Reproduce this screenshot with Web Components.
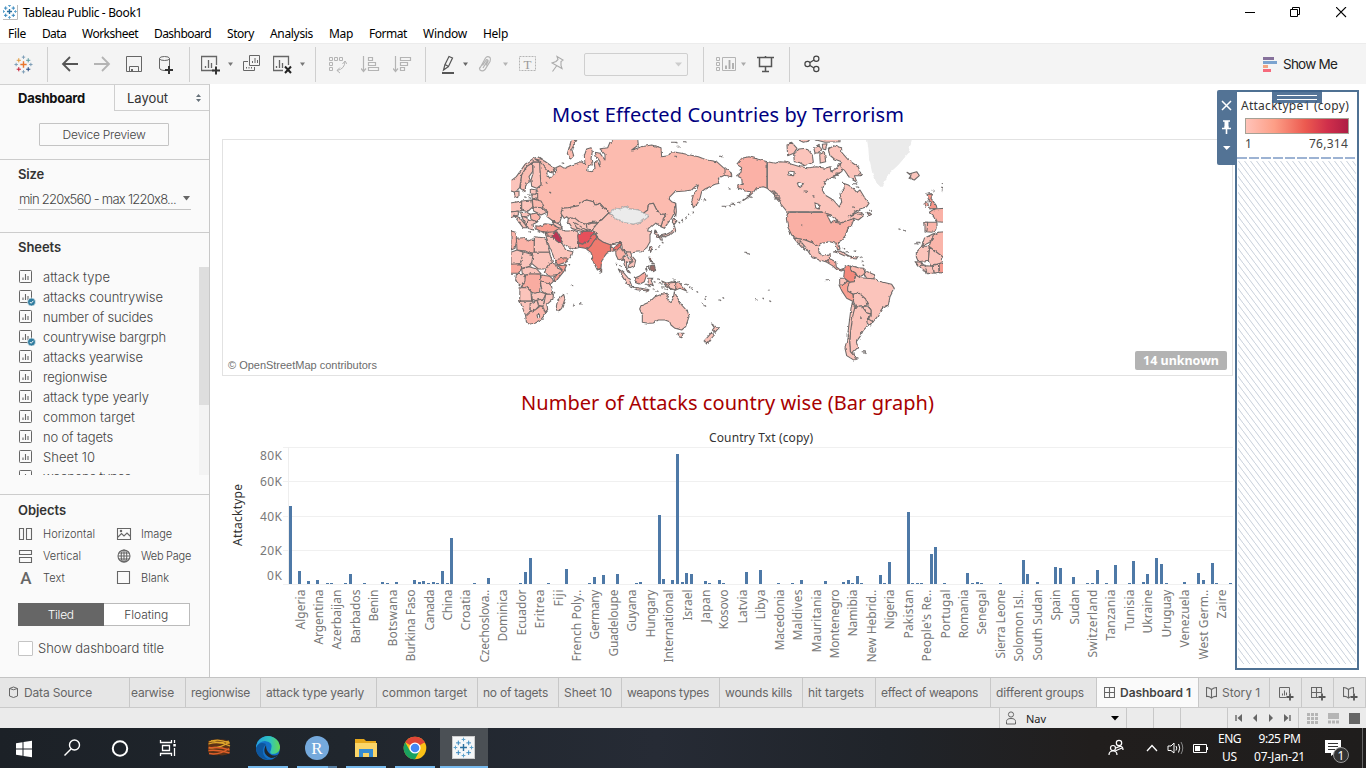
<!DOCTYPE html>
<html lang="en">
<head>
<meta charset="utf-8">
<title>Tableau Public - Book1</title>
<style>
html,body{margin:0;height:100%;overflow:hidden;background:#fff}
body{display:flex;flex-direction:column;width:1366px;height:768px;font-family:"Noto Sans","Open Sans",sans-serif}
main{display:flex;flex:1;min-height:0}
</style>
</head>
<body>
<title-bar></title-bar>
<menu-bar></menu-bar>
<tool-bar></tool-bar>
<main>
<side-panel></side-panel>
<dash-board></dash-board>
<legend-panel></legend-panel>
</main>
<sheet-tabs></sheet-tabs>
<status-bar></status-bar>
<task-bar></task-bar>
<script>
/* Each row item is [start, width, markup]; gaps become margins inside a flex row. */
function row(items, from = 0) {
  let end = from;
  return items.map(([x, w, html]) => {
    const m = x - end; end = x + w;
    return `<span class="i" style="margin-left:${m}px;width:${w}px">${html}</span>`;
  }).join('');
}
const svg = (x, y, w, h, body) => `<svg width="${w}" height="${h}" viewBox="${x} ${y} ${w} ${h}">${body}</svg>`;
const txt = (w, s, cls = '') => `<fit-text w="${w}" class="${cls}">${s}</fit-text>`;
const BASE = `:host,*{box-sizing:border-box}.i{display:inline-flex;align-items:center;flex:none}svg{display:block;flex:none}fit-text{flex:none}`;
function define(name, css, html) {
  customElements.define(name, class extends HTMLElement {
    connectedCallback() {
      if (this.shadowRoot) return;
      this.attachShadow({mode: 'open'}).innerHTML = `<style>${BASE}${css}</style>${html}`;
    }
  });
}
function plus(x, y, c, l = 2, sw = 1) {
  return `<path d="M${x - l} ${y}H${x + l}M${x} ${y - l}V${y + l}" stroke="${c}" stroke-width="${sw}" fill="none"/>`;
}
function logo(cx, cy, c, s = 1) {
  return plus(cx, cy, c[0], 3 * s, 1.4) + plus(cx - 4.5 * s, cy - 4 * s, c[1], 2 * s) + plus(cx + 4.5 * s, cy - 4 * s, c[2], 2 * s)
    + plus(cx - 4.5 * s, cy + 4.5 * s, c[3], 2 * s) + plus(cx + 4.5 * s, cy + 4.5 * s, c[4], 2 * s)
    + plus(cx, cy - 7 * s, c[5], 1.6 * s) + plus(cx, cy + 7 * s, c[5], 1.6 * s) + plus(cx - 7 * s, cy, c[5], 1.6 * s) + plus(cx + 7 * s, cy, c[5], 1.6 * s);
}
const BLUE = ['#2a6f9e', '#3b8abf', '#3b8abf', '#3b8abf', '#3b8abf', '#5fa3cc'];

define('title-bar', `:host{display:flex;height:24px;align-items:center;background:#fff;font-size:12px;color:#000}`,
  row([
    [3, 15, svg(3, 4, 15, 15, '<rect x="3" y="4" width="15" height="15" fill="#fff"/><path d="M17.5 4V18.5H3" stroke="#bbb" fill="none"/>' + logo(9.5, 10.5, BLUE, .85))],
    [23, 120, txt(119, 'Tableau Public - Book1')],
    [1245, 11, svg(1245, 5, 11, 11, '<path d="M1245 10.500H1255" stroke="#000"/>')],
    [1290, 11, svg(1290, 5, 11, 11, '<path d="M1290.500 7.500H1297.500V14.500H1290.500ZM1292.500 7.500V5.500H1299.500V12.500H1297.500" fill="none" stroke="#000"/>')],
    [1336, 11, svg(1336, 5, 11, 11, '<path d="M1336 5L1346 15M1346 5L1336 15" stroke="#000" stroke-width="1.1"/>')]
  ]));

define('menu-bar', `:host{display:flex;height:19px;align-items:center;background:#fff;font-size:12px;color:#000}`,
  row([[8,18,'File'],[42,24,'Data'],[82,56,'Worksheet'],[154,57,'Dashboard'],[227,27,'Story'],[270,43,'Analysis'],[329,24,'Map'],[369,38,'Format'],[423,44,'Window'],[483,25,'Help']]
    .map(([x, w, t]) => [x, w, txt(w, t)])));

const sep = x => [x, 1, '<b class="sep"></b>'];
const arrow = (x, c = '#777') => [x, 5, svg(x, 60, 5, 8, `<path d="M${x} 62.500H${x + 5}L${x + 2.5} 66Z" fill="${c}"/>`)];
const ic = (x, w, body) => [x, w, svg(x, 54, w, 21, body)];
define('tool-bar', `:host{display:flex;height:41px;align-items:center;background:#f4f4f4;border-top:1px solid #ececec;font-family:Inter,sans-serif;font-size:13.500px;color:#222}.sep{width:1px;height:35px;background:#cfcfcf}.combo{width:104px;height:23px;border:1px solid #cfcfcf;border-radius:2px;display:flex;justify-content:flex-end;align-items:center;padding-right:5px}`,
  row([
    ic(14, 20, logo(23.5, 64.5, ['#e8762c', '#e29b3f', '#5b9aa0', '#c72037', '#1f447e', '#7f9fb8'], 1.05)),
    sep(47),
    ic(61, 18, '<path d="M62.500 64H78M70 57L63 64L70 71" fill="none" stroke="#555" stroke-width="1.800"/>'),
    ic(93, 18, '<path d="M94 64H109M102 57L109 64L102 71" fill="none" stroke="#b4b4b4" stroke-width="1.800"/>'),
    ic(126, 17, '<path d="M126.500 56.500H141.500V71.500H126.500ZM129.500 71V66.500H138.500V71" fill="none" stroke="#666"/><rect x="131" y="69" width="2" height="3" fill="#666"/>'),
    ic(158, 16, '<path d="M159.500 58.500V68C159.500 69.500 162 70.500 165 70.500M169.500 58.500V66" fill="none" stroke="#666"/><ellipse cx="164.500" cy="58.500" rx="5" ry="2" fill="none" stroke="#666"/><path d="M165 70H173M169 66V74" stroke="#333" stroke-width="2"/>'),
    sep(189),
    ic(201, 20, '<path d="M214 70.500H201.500V56.500H216.500V65M205.500 68V66M208.500 68V60M211.500 68V63" fill="none" stroke="#666" stroke-width="1.300"/><path d="M212 70.500H220M216 66.500V74.500" stroke="#333" stroke-width="2"/>'),
    arrow(228),
    ic(242, 19, '<path d="M249.500 55.500H259.500V65.500H249.500ZM252.500 63V61M255 63V58M257.500 63V60M248 61.500H243.500V70.500H254.500V67M246.500 68.500V67M249 68.500V67M251.500 68.500V67" fill="none" stroke="#666"/>'),
    ic(273, 20, '<path d="M283 70.500H273.500V56.500H288.500V65M276.500 68V66M279.500 68V60M282.500 68V63" fill="none" stroke="#666" stroke-width="1.300"/><path d="M285 66.500L291 73M291 66.500L285 73" stroke="#222" stroke-width="2"/>'),
    arrow(300), sep(315),
    ic(329, 18, '<path d="M329.500 57.500h3v3h-3zM334.500 57.500h3v3h-3zM339.500 57.500h3v3h-3zM329.500 62.500h3v3h-3zM329.500 67.500h3v3h-3zM345 61Q345 69 337 70.500M342.500 64L345 61L347 64M340 67.500L337 70.500L340 73" fill="none" stroke="#b4b4b4"/>'),
    ic(361, 19, '<path d="M363.500 56V71M361 68.500L363.500 71.500L366 68.500M368.500 57.500h4v3h-4zM368.500 62.500h7v3h-7zM368.500 67.500h10v3h-10z" fill="none" stroke="#b4b4b4" stroke-width="1.200"/>'),
    ic(393, 19, '<path d="M395.500 56V71M393 68.500L395.500 71.500L398 68.500M400.500 57.500h10v3h-10zM400.500 62.500h7v3h-7zM400.500 67.500h4v3h-4z" fill="none" stroke="#b4b4b4" stroke-width="1.200"/>'),
    sep(425),
    ic(441, 14, '<path d="M442 73H454" stroke="#555" stroke-width="2"/><path d="M445 64.500L449 56.500L452.500 58L448.500 66.500ZM445 64.500L443.500 70L448.500 66.500" fill="none" stroke="#555" stroke-width="1.200"/>'),
    arrow(463, '#666'),
    ic(478, 14, '<path d="M480 68L485.500 58Q487.500 55.500 490 57.500Q491 59 490 61.500L485 69.500Q482.500 72 480 70Q479 68.500 480 67M483 68L487.500 60.500M486 65.500L488 61.500Q488.500 59.500 486.500 59.500L482.500 65.500" fill="none" stroke="#b4b4b4" stroke-width="1.200"/>'),
    arrow(503, '#b4b4b4'),
    ic(519, 18, '<rect x="519.500" y="56.500" width="16" height="14" fill="none" stroke="#b4b4b4" stroke-dasharray="2 1"/><text x="527.500" y="68.500" text-anchor="middle" font-family="Liberation Serif" font-size="13" fill="#999">T</text>'),
    ic(551, 13, '<path d="M557 56.500L563 60L561 61.500L561 65.500L562 68.500L552 63L556 61.500L558 59.500ZM556.500 66L552.500 71.500" fill="none" stroke="#aaa" stroke-width="1.100"/>'),
    [584, 104, '<div class="combo">' + svg(0, 0, 8, 5, '<path d="M1 .5H8L4.500 4.500Z" fill="#ccc"/>') + '</div>'],
    sep(703),
    ic(716, 21, '<path d="M716.500 57.500h3v3h-3zM716.500 62.500h3v3h-3zM716.500 67.500h3v3h-3zM722.500 57.500h13v13h-13z" fill="none" stroke="#b4b4b4"/><path d="M726 69V65.500M729.500 69V60M733 69V63" stroke="#aaa" stroke-width="1.800"/>'),
    arrow(741, '#aaa'),
    ic(757, 18, '<path d="M757 57.500H774M765.500 56V57M759.500 58V66.500H771.500V58M765.500 67V71M762 71.500H769" fill="none" stroke="#555" stroke-width="1.500"/>'),
    sep(789),
    ic(804, 16, '<path d="M810 62.500L814 60M810 65.500L814 68" stroke="#444" stroke-width="1.300"/><circle cx="807.500" cy="64" r="2.600" fill="none" stroke="#444" stroke-width="1.200"/><circle cx="816.300" cy="58.700" r="2.600" fill="none" stroke="#444" stroke-width="1.200"/><circle cx="816.300" cy="69" r="2.600" fill="none" stroke="#444" stroke-width="1.200"/>'),
    [1263, 14, svg(1263, 55, 14, 17, '<path d="M1263 56h11v3h-11z" fill="#86719b"/><path d="M1263 60h14v3h-14z" fill="#7ba3cf"/><path d="M1263 64h5v3h-5z" fill="#f4a582"/><path d="M1263 68h8v3h-8z" fill="#f66a7c"/>')],
    [1283, 55, txt(54, 'Show Me')]
  ]));

const sheetIcon = on => svg(0, 0, 18, 18, '<rect x="1.500" y="2.500" width="12" height="12" rx=".8" fill="none" stroke="#666"/><path d="M5 12V9.500M7.500 12V6M10 12V8" stroke="#666" stroke-width="1.100"/>'
  + (on ? '<circle cx="13.500" cy="14" r="4" fill="#2f7c9f" stroke="#fafafa" stroke-width=".6"/><path d="M11.800 14l1.300 1.300 2.300-2.500" fill="none" stroke="#fff"/>' : ''));
const sheets = [['attack type',67],['attacks countrywise',120,1],['number of sucides',110],['countrywise bargrph',123,1],['attacks yearwise',100],['regionwise',64],['attack type yearly',106],['common target',92],['no of tagets',70],['Sheet 10',52],['weapons types',88]];
const obj = {
  h: '<path d="M1.500 2.500h4v11h-4zM8.500 2.500h5v11h-5z"/>', v: '<path d="M1.500 2.500h12v4h-12zM1.500 9.500h12v5h-12z"/>',
  i: '<path d="M1.500 2.500h13v11h-13zM2 11L5.500 7.500L8 10L11 7L14 10"/><circle cx="5" cy="5" r=".7"/>',
  w: '<circle cx="8" cy="8" r="6"/><ellipse cx="8" cy="8" rx="2.800" ry="6"/><path d="M2 8H14M8 2V14M3 5H13M3 11H13"/>', b: '<path d="M1.500 1.500h12v12h-12z"/>'
};
const oi = k => k === 'a' ? '<b class="ai">A</b>' : svg(0, 0, 16, 16, `<g fill="none" stroke="#666" stroke-width="1.100">${obj[k]}</g>`);
define('side-panel', `:host{display:flex;flex-direction:column;width:210px;height:593px;flex:none;background:#fafafa;border-right:1px solid #c8c8c8;border-top:1px solid #d0d0d0;font-family:Inter,sans-serif;font-size:13px;color:#444;font-weight:300}
.tabs{display:flex;height:26px;color:#111}.tabs>div{display:flex;align-items:center}.t1{width:114px;padding-left:18px;font-weight:700}.t2{flex:1;border-left:1px solid #cfcfcf;border-bottom:1px solid #cfcfcf;padding:0 8px 0 12px;justify-content:space-between;font-weight:400;color:#333}
h4{margin:0;font-size:13px;color:#333;font-weight:600;line-height:16px;display:flex}
.btn{margin:12px 0 13px 39px;width:130px;height:23px;border:1px solid #c4c4c4;border-radius:1px;display:flex;align-items:center;justify-content:center;font-size:12px;padding-bottom:1px}
.size{border-top:1px solid #ccc;height:73px;padding:6px 18px}.drop{display:flex;height:21px;margin-top:7px;width:173px;border-bottom:1px solid #c4c4c4;align-items:center;justify-content:space-between;padding-left:1px;padding-bottom:1px}
.sheets{border-top:1px solid #ccc;height:262px;padding:6px 0 0 18px}.list{display:flex;height:208px;margin-top:12px;overflow:hidden}.items{flex:1}.items>div{display:flex;height:20px;align-items:center;gap:7px}.bar{width:10px;background:#f3f3f3}.bar i{display:block;height:138px;background:#dedede}
.obj{border-top:1px solid #ccc;padding:7px 18px 0;flex:1}.grid{display:grid;grid-template-columns:98px 88px;grid-auto-rows:22px;margin-top:5px;font-size:11px}.grid div{display:flex;align-items:center;gap:9px}.ai{width:16px;text-align:center;font:500 17px/20px Roboto,sans-serif;color:#666}.seg{display:flex;height:23px;width:172px;margin-top:14px;border:1px solid #bbb;font-size:12px}.seg div{flex:1;display:flex;align-items:center;justify-content:center;background:#fff}.seg .on{background:#666;color:#fff;margin:-1px 0 -1px -1px}
.chk{display:flex;align-items:center;gap:5px;margin-top:14px}.chk i{width:15px;height:15px;background:#fff;border:1px solid #c4c4c4;border-radius:1px}`,
  `<div class="tabs"><div class="t1">${txt(67, 'Dashboard')}</div><div class="t2">${txt(41, 'Layout')}${svg(0, 0, 5, 8, '<path d="M0 3L2.500 0L5 3ZM0 5H5L2.500 8Z" fill="#67727a"/>')}</div></div>
  <div class="btn">${txt(83, 'Device Preview')}</div>
  <div class="size"><h4>${txt(26, 'Size')}</h4><div class="drop">${txt(160, 'min 220x560 - max 1220x8...')}${svg(0, 0, 8, 5, '<path d="M0 0H7L3.500 4.500Z" fill="#666"/>')}</div></div>
  <div class="sheets"><h4>${txt(43, 'Sheets')}</h4><div class="list"><div class="items">${sheets.map(s => `<div>${sheetIcon(s[2])}${txt(s[1], s[0])}</div>`).join('')}</div><div class="bar"><i></i></div></div></div>
  <div class="obj"><h4>${txt(48, 'Objects')}</h4><div class="grid">${[['h','Horizontal',52],['i','Image',31],['v','Vertical',38],['w','Web Page',50],['a','Text',22],['b','Blank',28]].map(o => `<div>${oi(o[0])}${txt(o[2], o[1])}</div>`).join('')}</div>
  <div class="seg"><div class="on">${txt(26, 'Tiled')}</div><div>${txt(44, 'Floating')}</div></div><div class="chk"><i></i>${txt(126, 'Show dashboard title')}</div></div>`);

/* World map: two hemispheres drawn on a fine grid, three units to the pixel. */
const P = (pts, f = '#fbc4bb') => `<polygon points="${pts}" fill="${f}"/>`;
const west = [
P('95,75 108,75 130,88 148,100 150,108 140,115 128,108 125,118 135,130 142,122 155,112 152,98 165,92 178,100 195,92 215,85 228,80 240,88 238,62 245,42 258,38 262,50 258,70 262,90 250,95 248,108 262,110 270,100 268,82 278,80 285,95 285,80 275,65 270,52 285,55 300,75 300,58 285,42 308,38 315,22 325,12 398,12 400,30 380,45 390,42 410,35 440,30 468,38 470,65 490,62 500,50 530,55 555,60 580,65 605,75 635,80 655,98 680,115 680,124 660,120 640,130 645,145 630,148 600,162 590,170 585,190 578,205 565,218 560,200 565,180 575,165 580,150 570,155 560,165 540,168 510,170 490,190 500,200 512,205 512,225 500,250 490,262 478,280 468,275 475,250 485,238 470,238 455,225 445,205 430,208 428,225 415,235 400,225 375,222 360,215 345,222 330,220 315,235 305,228 285,205 270,210 265,200 245,195 222,205 220,212 190,218 172,220 170,245 165,260 158,265 140,255 126,245 128,230 110,215 100,205 90,190 98,170 100,155 108,150 105,110','#fcbbaf'),
P('200,12 216,14 200,42 206,62 197,72 187,56','#fcbbaf'),
P('172,220 190,218 220,212 222,205 245,195 265,200 270,210 285,205 305,228 310,235 300,245 290,255 275,262 262,262 240,268 225,262 210,250 190,250 185,245 178,250 168,236'),
P('310,235 318,238 330,250 355,262 385,267 410,260 430,245 415,235 428,225 430,208 445,205 455,225 470,238 485,238 475,250 468,275 455,262 440,275 430,280 428,288 440,290 435,300 435,320 425,338 410,350 390,352 375,355 365,350 352,345 350,328 345,322 330,328 315,330 295,322 280,312 272,298 265,288 260,275 275,262 290,255 300,245'),
`<polygon points="315,235 330,220 345,222 360,215 375,222 400,225 415,235 430,240 428,247 410,260 385,267 355,262 330,250" fill="#ebebeb" stroke="#bdbdbd"/>`,
P('190,250 210,250 225,262 240,268 262,262 270,275 250,290 232,290 215,285 200,280 188,262'),
P('205,262 218,268 235,280 250,288 238,288 215,278'), P('244,270 262,264 278,265 268,275 258,284 246,282'),
P('158,275 170,280 180,288 195,288 205,285 218,290 222,305 222,320 220,338 205,342 190,335 175,325 165,310 152,290'),
P('218,300 232,290 250,288 270,290 258,305 250,320 232,328 220,322','#e74f5b'),
P('220,324 232,328 250,320 258,303 270,296 278,306 268,318 258,332 255,345 240,340 222,337','#ef6a67'),
P('272,298 280,312 295,322 318,330 320,340 335,335 350,322 345,335 330,350 318,350 305,355 290,375 288,400 277,405 265,380 258,352 246,344 258,332 265,320 275,308','#ef7a6e'),
P('282,402 290,402 290,412 285,410','#f48f80'), P('316,333 326,336 324,352 317,348','#f8a197'), P('328,338 345,322 350,328 340,345 332,350','#ee6f68'),
P('332,350 345,336 352,346 362,356 354,366 358,380 350,372 340,375 333,360','#fab1a5'),
P('354,366 366,362 372,372 384,374 374,384 364,380 366,400 376,414 368,410 358,390'), P('362,352 376,350 380,362 392,376 388,392 374,398 372,388 384,380 378,368 368,362'),
P('340,402 355,412 372,432 380,452 368,448 352,425'), P('376,456 400,458 432,464 430,468 396,464'), P('388,430 402,424 418,412 424,422 418,440 405,447 392,442','#f9aa9f'),
P('428,430 445,430 438,436 445,452 436,448 432,455'), P('470,438 486,445 500,440 525,445 545,468 525,460 510,466 495,460 480,450','#f9b0a5'), P('486,445 512,442 512,465 495,460'),
P('432,366 440,368 440,382 448,386 436,382','#8a6461'), P('436,392 448,390 452,406 444,410 434,402','#9a6c68'), P('422,402 432,392 424,406','#8a6461'),
P('450,285 458,292 462,308 454,306 456,298 448,292'), P('468,302 485,298 500,290 508,272 512,286 498,298 478,306'), P('504,252 516,258 508,268 502,262'),P('512,205 514,230 512,246 507,228'),
P('462,304 470,306 472,316 466,314'), P('435,335 441,337 438,350 433,344'), P('408,512 435,500 450,485 470,478 490,475 485,490 498,500 505,490 508,470 518,490 530,510 548,530 552,545 542,575 530,585 510,580 498,570 494,560 480,555 460,555 445,564 430,565 412,562 412,540 404,522'),
P('518,595 534,595 530,608 522,605'), P('620,567 628,572 640,580 630,592 622,585 628,578'), P('620,592 628,600 605,627 597,618 610,604'),
P('120,292 142,304 155,318 172,326 182,345 204,350 200,362 186,380 160,388 148,370 135,340 126,315'), P('150,374 180,368 188,372 182,382 158,390','#f69a8d'),
P('140,304 146,292 156,290 164,304 172,325 158,320','#be3455'), P('126,294 142,288 148,292 140,304 126,304','#f8a69b'),
P('92,272 102,274 120,266 155,270 160,282 146,290 128,292 105,288 94,282','#f89f92'),
P('140,258 160,266 172,276 166,280 150,274'),
P('18,288 32,292 36,312 30,340 18,345','#fbb4a9'), P('34,310 55,308 70,318 88,310 88,352 88,360 60,348 36,345','#fab3a8'), P('88,305 115,308 124,315 134,352 88,352'),
P('18,352 36,345 55,352 50,385 18,390'), P('55,350 85,360 82,380 70,395 50,400 46,388'), P('85,352 133,352 142,380 125,402 100,402 80,385'),
P('12,388 48,386 50,400 40,415 12,415','#f9a99d'), P('50,402 72,395 95,402 108,416 62,420 52,415'), P('125,402 138,382 155,390 158,400 172,405 155,422 135,424 118,412','#fbb9ae'),
P('158,392 185,390 176,410 150,442 146,426 158,420 172,405','#f69c90'), P('62,422 75,416 106,418 108,440 104,468 92,476 80,472 65,456 50,458 56,440','#f9aca1'),
P('34,418 60,420 60,438 50,455 40,446 32,436'), P('45,458 66,458 78,470 80,498 44,498'), P('106,442 132,444 140,455 144,478 125,478 112,470'), P('108,420 134,424 148,436 136,448 108,440','#fab5aa'),
P('80,478 104,470 122,476 118,488 100,498 82,494'), P('122,478 145,478 144,492 126,508 128,524 118,534 112,520 118,500'), P('45,499 82,499 75,520 74,540 62,542'), P('75,506 95,496 106,508 92,524 76,530'), P('96,496 112,492 118,500 112,516 100,510'),
P('62,542 75,530 92,524 108,512 116,520 122,536 106,556 90,565 70,568 64,560','#fbb6ab'), P('96,540 103,538 104,546 98,548','#fff'), P('158,495 172,482 176,478 180,492 170,520 160,530 154,514'),
P('12,142 34,125 45,110 60,88 85,70 100,66 115,76 105,82 85,80 65,95 50,120 44,158 30,172 12,166'), P('50,120 65,95 82,84 84,108 72,125 76,140 62,152 60,170 46,160','#fbbdb2'), P('84,82 104,82 105,110 108,150 95,160 80,154 78,135 84,116'), P('90,72 118,78 150,100 142,112 126,104 108,84','#fbbdb2'),
P('28,172 42,168 42,186 30,190'), P('12,205 50,198 50,228 12,230'), P('50,198 80,195 84,215 70,228 50,222'), P('82,192 108,198 116,212 100,222 84,216','#fab8ad'), P('84,216 110,218 126,232 108,240 98,234 86,228'), P('80,178 98,175 98,192 82,192'), P('76,162 95,165 92,178 76,176'),
P('12,232 40,228 40,240 12,250'), P('46,234 62,230 76,238 70,246 50,244'), P('76,238 96,234 106,246 98,260 78,254','#fbb4a9'), P('62,258 80,254 96,262 84,268 86,285 72,282 62,266'), P('50,244 66,248 68,268 58,262'), P('26,240 44,248 60,268 66,278 54,278 38,256')
].join('');
const east = [
P('35,88 50,70 72,65 100,73 127,80 127,160 115,155 95,158 85,172 65,190 50,200 70,185 78,170 60,168 40,160 38,150 52,145 50,130 35,122 48,112 50,98','#fbb1a6'),
P('0,98 18,114 20,125 0,121','#fcbbaf'),
P('127,80 150,85 165,80 185,82 200,88 225,95 250,98 275,95 300,100 315,95 318,110 335,100 345,85 358,92 350,110 335,120 320,128 300,140 292,165 300,180 325,195 343,216 350,200 345,175 358,160 355,145 370,150 385,160 395,172 405,165 420,190 432,205 425,215 405,222 385,235 370,245 402,230 418,240 400,255 385,250 370,258 345,265 330,262 318,240 292,232 188,232 170,210 158,195 150,180 127,160'),
P('188,232 292,232 318,240 330,262 345,265 370,255 388,250 380,270 368,282 362,300 350,315 340,322 345,342 338,345 332,325 315,320 290,325 280,335 265,325 240,315 215,310 200,300 188,275 184,250','#fab0a5'),
P('205,308 240,315 265,325 280,335 282,350 290,362 305,362 316,356 312,372 302,380 285,375 262,368 250,350 240,335 226,318 240,346 228,335'),
P('302,380 316,372 332,380 334,396 345,404 358,400 350,408 338,406 322,392','#f9a99e'), P('326,350 345,348 374,364 358,362 340,354'), P('376,364 398,366 394,372 378,370'),
P('360,396 375,390 378,405 392,414 388,440 375,442 356,428 358,410','#f4897c'), P('375,390 384,394 400,398 416,400 424,408 414,420 400,428 392,414 378,405','#fbb9ae'), P('422,408 450,420 446,432 425,430 418,418'),
P('344,430 358,430 368,438 356,448 344,446'), P('342,450 356,448 368,438 378,446 368,460 372,470 384,478 386,500 365,490 352,470','#f9a092'),
P('375,442 388,440 392,420 405,428 425,430 450,432 460,438 500,448 508,460 495,485 490,510 470,522 455,548 440,565 424,556 438,545 438,525 424,500 400,475 385,478 368,468 368,456'),
P('385,478 400,472 422,492 426,512 405,512 394,517 386,502'), P('412,514 426,512 438,525 438,536 426,534'),
P('390,515 412,516 426,534 438,538 425,555 428,572 415,586 405,605 394,620 398,638 386,650 390,668 376,650 374,620 376,580 382,540'),
P('382,502 390,515 384,540 378,580 374,620 376,650 394,670 388,676 365,662 360,640 368,600 373,560 378,520'), P('426,550 444,560 438,570 426,564'),
`<polygon points="425,8 562,8 550,55 520,90 490,118 475,150 468,157 455,145 442,115 432,70 430,40" fill="#ebebeb" stroke="none"/>`,
P('546,112 554,116 575,110 583,122 568,135 552,130 558,122'), P('606,178 622,178 618,190 634,212 636,220 614,222 618,206 610,192','#f79588'), P('596,208 608,198 610,212 600,217','#f9a69b'),
P('612,232 628,222 660,220 660,262 634,260 626,245','#fab1a6'), P('600,262 636,262 636,282 622,292 604,290','#fbb4a9'), P('600,262 608,262 606,288 600,288'),
P('598,310 625,296 640,292 632,310 610,324 590,334'), P('625,300 640,292 660,290 660,362 650,366 612,334','#fab5aa'), P('574,352 590,334 612,334 612,376 580,380 574,366'), P('614,336 654,366 650,384 632,388 618,394 610,378'),
P('570,380 590,382 598,394 580,392'), P('582,392 600,390 610,412 596,408'), P('600,392 622,394 628,414 606,416'), P('624,392 640,386 642,412 628,414'), P('642,386 660,380 660,412 644,414','#f69a8e'),
P('186,30 200,22 216,40 206,55 188,62'), P('206,58 222,42 245,40 262,60 265,82 240,92 222,82 208,80'), P('266,38 282,28 290,44 282,54 270,54'), P('284,58 298,52 302,80 286,84'), P('310,40 325,32 350,38 350,52 370,75 400,96 410,122 388,122 396,142 375,130 360,108 345,92 350,80 328,72 314,60'), P('220,14 235,22 250,18 256,12'), P('262,12 300,22 345,20 345,10'), P('292,28 306,26 302,44 294,42'),
P('190,108 208,110 206,122 192,120','#fff'), P('216,142 236,146 222,158','#fff'), P('270,204 286,210 280,222 272,218','#fff'), P('306,240 330,248 338,260 326,256 318,264','#fff'),
P('426,232 440,238 432,242')
].join('');
/* Scattered islets: [x, y, size] */
const dots = (list) => list.map(d => `<path d="M${d[0]} ${d[1]}h${d[2]}l2 3" fill="none"/>`).join('');
const islesW = dots([[498,22,14],[534,20,8],[515,34,6],[508,64,6],[170,84,5],[122,142,4],[132,172,4],[642,64,8],[596,194,5],[650,214,8],[560,232,3],[550,240,3],[540,248,3],[528,256,4],[520,262,3],[470,322,3],[462,332,2],[450,342,2],[345,392,3],[332,385,2],[390,440,4],[420,448,6],[446,440,6],[456,432,6],[462,446,8],[470,456,8],[478,462,8],[450,468,8],[440,462,6],[505,432,6],[516,438,6],[540,448,6],[552,456,4],[560,462,4],[574,470,3],[600,485,3],[598,492,3],[588,508,5],[596,512,5],[640,495,6],[652,488,3],[190,388,3],[200,450,2],[205,508,2],[225,506,2],[185,474,2],[146,472,2],[98,290,5],[70,290,6],[40,262,5],[110,292,5],[60,144,2],[66,180,8],[56,186,6],[70,188,5]]);
const islesE = dots([[10,158,4],[2,212,10],[16,208,12],[36,202,8],[58,352,6],[66,356,6],[302,434,8],[128,464,3],[90,494,5],[112,490,4],[132,498,4],[410,650,10],[414,654,8],[520,282,4],[534,286,6],[568,326,10],[574,322,10],[648,160,4],[650,148,4],[650,168,3],[610,176,12],[620,166,6],[352,340,6],[360,350,6],[386,348,4],[404,366,3],[410,378,3],[412,390,3],[220,318,6],[232,340,4],[228,270,3],[384,216,3],[405,548,3],[140,168,8],[144,176,12],[148,182,14],[152,188,12],[158,196,8],[142,172,10],[150,192,10],[64,182,8],[72,186,8],[324,120,14],[318,128,12],[332,114,14],[384,146,10],[392,156,8],[236,168,10],[262,182,4],[364,600,6],[366,610,5],[364,590,6],[365,604,5],[388,668,10],[400,238,8],[432,226,6]]);
define('world-map', `:host{display:block}`,
  `<svg width="1009" height="235" viewBox="223 140 1009 235"><defs><clipPath id="m"><rect x="511" y="140" width="432" height="235"/></clipPath>
  <filter id="coast" x="505" y="135" width="445" height="240" filterUnits="userSpaceOnUse" color-interpolation-filters="sRGB"><feTurbulence type="fractalNoise" baseFrequency=".22" numOctaves="2" seed="4" result="n"/><feDisplacementMap in="SourceGraphic" in2="n" scale="3" xChannelSelector="R" yChannelSelector="G"/></filter></defs>
  <g clip-path="url(#m)"><g filter="url(#coast)" stroke="#6f6a69" stroke-width="3.200" stroke-linejoin="round"><g transform="translate(505 135) scale(.33333)">${west}${islesW}</g><g transform="translate(725 135) scale(.33333)">${east}${islesE}</g></g>
  <path d="M767.200 162V188M788 212H822" stroke="#777" stroke-width="1.300"/></g></svg>`);

const bars = [[289,78],[298,13],[307,3],[316,4],[326,1],[330,1],[344,1],[349,10],[363,1],[381,2],[386,1],[395,2],[413,4],[418,2],[422,3],[427,1],[432,2],[436,1],[441,13],[446,1],[450,46],[473,1],[487,6],[519,1],[524,12],[529,26],[547,1],[565,15],[588,1],[593,7],[602,9],[616,10],[635,1],[639,2],[658,69],[662,5],[671,4],[676,130],[681,2],[685,11],[690,10],[704,3],[708,1],[718,4],[722,1],[745,12],[759,14],[777,1],[791,1],[800,4],[824,3],[842,2],[847,4],[851,1],[856,8],[860,1],[879,9],[883,1],[888,22],[907,72],[911,1],[916,1],[920,1],[930,30],[934,37],[943,1],[966,11],[971,1],[976,2],[980,1],[999,1],[1022,24],[1026,10],[1036,2],[1054,17],[1059,16],[1072,7],[1086,1],[1091,1],[1096,14],[1105,1],[1114,19],[1128,1],[1132,23],[1142,2],[1146,10],[1155,26],[1160,20],[1165,1],[1183,2],[1197,11],[1202,4],[1211,21],[1215,1],[1229,1]];
const names = "Algeria|40,Argentina|55,Azerbaijan|60,Barbados|54,Benin|32,Botswana|57,Burkina Faso|72,Canada|41,China|31,Croatia|41,Czechoslova..|73,Dominica|52,Ecuador|46,Eritrea|39,Fiji|17,French Poly..|72,Germany|50,Guadeloupe|67,Guyana|42,Hungary|48,International|73,Israel|31,Japan|33,Kosovo|40,Latvia|34,Libya|30,Macedonia|61,Maldives|51,Mauritania|63,Montenegro|69,Namibia|47,New Hebrid..|73,Nigeria|40,Pakistan|49,People's Re..|72,Portugal|49,Romania|49,Senegal|45,Sierra Leone|69,Solomon Isl..|72,South Sudan|71,Spain|31,Sudan|35,Switzerland|68,Tanzania|51,Tunisia|41,Ukraine|44,Uruguay|48,Venezuela|58,West Germ..|70,Zaire|29".split(',').map(s => s.split('|'));
define('bar-chart', `:host{display:block}text{font-family:"Noto Sans",sans-serif;font-size:12px;fill:#787878}.d{fill:#333}`,
  svg(222, 425, 1011, 245,
    [447, 481, 516, 550, 584].map(y => `<path d="M283 ${y}.5H1233" stroke="#f0f0f0"/>`).join('') + '<path d="M288.500 447V584" stroke="#eee"/>'
    + [['80K', 455, 22], ['60K', 481.5, 22], ['40K', 516.5, 22], ['20K', 550.5, 22], ['0K', 575.5, 15]].map(l => `<text x="${282 - l[2]}" y="${l[1] + 4.5}" textLength="${l[2]}">${l[0]}</text>`).join('')
    + bars.map(b => `<rect x="${b[0]}" y="${584 - b[1]}" width="3" height="${b[1]}" fill="#4e79a7"/>`).join('')
    + names.map((n, i) => `<text transform="translate(${304.5 + i * 18.43} ${589.5 + +n[1]}) rotate(-90)" textLength="${n[1]}">${n[0]}</text>`).join('')
    + '<text class="d" x="709" y="442" textLength="104">Country Txt (copy)</text><text class="d" transform="translate(242 546) rotate(-90)" textLength="62">Attacktype</text>'));

define('dash-board', `:host{display:flex;flex-direction:column;width:1023px;flex:none;padding-left:12px;background:#fff}
h2{margin:0;font-weight:400;font-size:20px;display:flex;line-height:26px}.a{color:#00007f;height:55px;padding:18px 0 0 330px}.b{color:#a80000;height:49px;padding:14px 0 0 299px}
.map{position:relative;width:1011px;height:237px;border:1px solid #e2e2e2}.attr{position:absolute;left:5px;bottom:3px;font:11px "Liberation Sans",sans-serif;color:#6c6c6c;line-height:13px}.badge{position:absolute;right:5px;bottom:5px;width:92px;height:19px;border-radius:2px;background:#b3b3b3;color:#fff;font-weight:700;font-size:12.500px;display:flex;align-items:center;justify-content:center}`,
  `<h2 class="a">${txt(352, 'Most Effected Countries by Terrorism')}</h2><div class="map"><world-map></world-map><div class="attr">${txt(149, '© OpenStreetMap contributors')}</div><div class="badge">${txt(76, '14 unknown')}</div></div><h2 class="b">${txt(413, 'Number of Attacks country wise (Bar graph)')}</h2><bar-chart></bar-chart>`);

define('legend-panel', `:host{display:flex;position:relative;width:133px;flex:none;padding-top:6px;font-size:12px;color:#444}
.tab{position:absolute;left:-16px;top:6px;width:20px;height:75px;background:#537395;border-radius:2px 0 0 2px;display:flex;flex-direction:column;align-items:center}
.box{margin:0 0 7px 2px;width:124px;height:580px;border:2px solid #4f7193;background:#fff;display:flex;flex-direction:column}
.handle{position:absolute;left:39px;top:6px;width:50px;height:13px;background:rgba(62,98,138,.88)}.name{padding:6px 0 0 4px;height:26px;line-height:15px;color:#333}.grad{margin-left:8px;width:104px;height:16px;border:1px solid #a5a195;background:linear-gradient(90deg,#ffc3b9,#fd9e86 28%,#ec5a50 58%,#d02f4b 80%,#ae1d45)}
.ends{display:flex;justify-content:space-between;width:103px;margin-left:8px;height:23px;line-height:20px}.dash{height:2px;background:repeating-linear-gradient(90deg,#9db3d3 0 10px,transparent 10px 12px)}`,
  `<div class="box"><div class="name">${txt(108, 'Attacktype1 (copy)')}</div><div class="grad"></div><div class="ends"><span>1</span>${txt(39, '76,314')}</div><div class="dash"></div>
  <svg width="120" height="507"><defs><pattern id="p" width="6" height="8" patternUnits="userSpaceOnUse"><path d="M0 0L6 8" stroke="#b9c3d0" stroke-width=".8"/></pattern></defs><rect x="1" y="2" width="118" height="503" fill="url(#p)"/></svg></div>
  <div class="tab">${svg(0, 0, 20, 75, '<path d="M5 11L14 20M14 11L5 20" stroke="#fff" stroke-width="1.500"/><path d="M6 31H13M7.500 37H11.500M5 38.500H14M9.500 39V44" stroke="#fff" stroke-width="1.600"/><path d="M7.500 31H11.500V38H7.500Z" fill="#fff"/><path d="M6 56H13.500L9.700 60Z" fill="#fff"/>')}</div>
  <div class="handle">${svg(0, 0, 50, 13, '<path d="M5 5.500H45M5 9.500H45" stroke="#fff"/>')}</div>`);

const tabs = [[130,56,1,43,'earwise'],[186,75,5,59,'regionwise'],[261,116,5,98,'attack type yearly'],[377,101,5,85,'common target'],[478,81,5,65,'no of tagets'],[559,63,5,48,'Sheet 10'],[622,98,5,82,'weapons types'],[720,83,5,67,'wounds kills'],[803,73,5,56,'hit targets'],[876,115,5,97,'effect of weapons'],[991,106,5,88,'different groups']];
const gridI = '<path d="M.5 1.500h10v10h-10zM5.500 1.500v10M.5 6.500h10" fill="none" stroke="#666" stroke-width="1.100"/>';
const bookI = '<path d="M.5 1.500Q3 1.500 5.500 3.500Q8 1.500 10.500 1.500V10.500Q8 10 5.500 12Q3 10 .5 10.500ZM5.500 3.500V12" fill="none" stroke="#666" stroke-width="1.100"/>';
const plusI = '<path d="M7.500 11H14.500M11 7.500V14.500" stroke="#e6e6e6" stroke-width="4"/><path d="M7.500 11H14.500M11 7.500V14.500" stroke="#555" stroke-width="1.800"/>';
define('sheet-tabs', `:host{display:flex;height:31px;background:#e6e6e6;border-top:1px solid #c4c4c4;border-bottom:1px solid #cacaca;font-family:Inter,sans-serif;font-size:12px;color:#666;font-weight:400}.t{display:flex;align-items:center;border-right:1px solid #c8c8c8;flex:none}.on{background:#fafafa;color:#444;font-weight:600}`,
  `<div class="t" style="width:130px;padding-left:9px;gap:6px">${svg(0, 0, 9, 13, '<path d="M.5 2.500V10Q4.500 13 8.500 10V2.500Q4.500 -.5 .5 2.500Q4.500 5 8.500 2.500" fill="none" stroke="#666"/>')}${txt(68, 'Data Source')}</div>`
  + tabs.map(t => `<div class="t" style="width:${t[1]}px;padding-left:${t[2]}px">${txt(t[3], t[4])}</div>`).join('')
  + `<div class="t on" style="width:102px;padding-left:7px;gap:5px">${svg(0, 0, 11, 13, gridI)}${txt(71, 'Dashboard 1')}</div><div class="t" style="width:71px;padding-left:7px;gap:5px">${svg(0, 0, 11, 13, bookI)}${txt(38, 'Story 1')}</div>`
  + [[32, '<path d="M.5 1.500h10v10h-10zM3.500 9.500v-2M5.500 9.500v-5M7.500 9.500v-3" fill="none" stroke="#666"/>'], [32, gridI], [32, bookI]].map(a => `<div class="t" style="width:${a[0]}px;padding:2px 0 0 9px">${svg(0, 0, 16, 16, a[1] + plusI)}</div>`).join(''));

const vs = x => [x, 1, '<b class="v"></b>'];
define('status-bar', `:host{display:flex;height:20px;background:#ebebeb;align-items:center;font-size:11px;color:#222}.v{width:1px;height:20px;background:#c8c8c8}`,
  row([vs(999), [1006, 10, svg(0, 0, 10, 14, '<circle cx="5" cy="3.500" r="2.600" fill="none" stroke="#666"/><path d="M.5 13V10.500Q.5 7.500 5 7.500T9.500 10.500V13Z" fill="none" stroke="#666"/>')], [1026, 20, txt(20, 'Nav')], [1111, 8, svg(0, 0, 8, 5, '<path d="M0 0H8L4 4.500Z" fill="#000"/>')], vs(1126), vs(1153), vs(1180), vs(1227),
    [1235, 8, svg(0, 0, 8, 8, '<path d="M1 1V7" stroke="#666" stroke-width="1.400"/><path d="M7 0V8L2.500 4Z" fill="#666"/>')], [1253, 5, svg(0, 0, 5, 8, '<path d="M4 0V8L0 4Z" fill="#666"/>')], [1269, 5, svg(0, 0, 5, 8, '<path d="M0 0V8L4 4Z" fill="#666"/>')], [1284, 8, svg(0, 0, 8, 8, '<path d="M6 1V7" stroke="#666" stroke-width="1.400"/><path d="M0 0V8L4.500 4Z" fill="#666"/>')],
    vs(1298), [1307, 11, svg(0, 0, 11, 11, '<path d="M0 1.500H11M0 5.500H11M0 9.500H11" stroke="#b5b5b5" stroke-width="3" stroke-dasharray="3 1"/>')], [1328, 11, svg(0, 0, 11, 11, '<path d="M0 0H11V6H0Z" fill="#b5b5b5"/><path d="M0 9H11" stroke="#b5b5b5" stroke-width="3" stroke-dasharray="3 1"/>')], [1349, 11, svg(0, 0, 11, 11, '<path d="M0 0H11V11H0Z" fill="#666"/>')]]));

const T = (x, w, body) => [x, w, svg(x, 728, w, 40, body)];
const under = (x, w, c = '#76b9ed') => `<rect x="${x}" y="766" width="${w}" height="2" fill="${c}"/>`;
define('task-bar', `:host{display:flex;height:40px;background:linear-gradient(90deg,#1c2127,#20262d 25%,#262b35 48%,#20242a 65%,#211e1d 80%,#1f1d1c);color:#fff;font-size:12px;align-items:center}.two{display:flex;flex-direction:column;align-items:center;line-height:18px}`,
  row([
    T(16, 16, '<path d="M16 743.300L22.500 742.300V748.500H16ZM23.500 742.100L32 740.800V748.500H23.500ZM16 749.500H22.500V755.700L16 754.700ZM23.500 749.500H32V757.200L23.500 755.900Z" fill="#fff"/>'),
    T(63, 19, '<circle cx="74.500" cy="745" r="5" fill="none" stroke="#fff" stroke-width="1.400"/><path d="M71 749L64.500 755.500" stroke="#fff" stroke-width="1.500"/>'),
    T(111, 18, '<circle cx="120" cy="748.500" r="7.200" fill="none" stroke="#fff" stroke-width="2"/>'),
    T(159, 18, '<path d="M160.500 740V742.500H171.500V740M162.500 745.500H169.500V750.500H162.500ZM160.500 756V753.500H171.500V756M174.500 740V743M174.500 748V756" fill="none" stroke="#fff" stroke-width="1.300"/><rect x="173.300" y="744" width="2.500" height="2.500" fill="#fff"/>'),
    T(207, 24, '<path d="M208 741Q213 738.500 219 739.500Q226 738.500 230 742V753Q224 756.500 219 755Q212 756 208 752Z" fill="#5d3216"/><path d="M209 742Q219 737.500 229.500 743.500M208.500 744Q219 740.500 230 746M209 747.500Q219 749 229.500 742M211 740.500Q220 744 229 741" fill="none" stroke="#e0a82c" stroke-width="1.300"/><path d="M208.500 748Q219 746.500 229.500 750M208.500 750.500Q219 749.500 229.500 753M209 753.500Q219 755.500 229 748.500" fill="none" stroke="#e0602a" stroke-width="1.400"/>'),
    T(248, 40, '<defs><linearGradient id="e1" x2="1"><stop stop-color="#249fe0"/><stop offset=".6" stop-color="#30c5bd"/><stop offset="1" stop-color="#66d84c"/></linearGradient></defs><circle cx="268" cy="748" r="12" fill="#1472c9"/><path d="M256 748A12 12 0 0 1 280 748Q279 754 272 754Q269 753 271 750Q274 742 265 741Q259 741 256 748Z" fill="url(#e1)"/><path d="M266 745Q261 754 271 758Q276 758 279 754Q274 757 270 754Q266 751 266 745Z" fill="#20262d"/><path d="M256 748Q259 741 266 744Q260 750 265 757Q269 761 275 758Q270 761 265 759Q256 757 256 748Z" fill="#0e569d"/>' + under(248, 40)),
    T(297, 40, '<circle cx="317" cy="748" r="12" fill="#75a9dc"/><text x="317" y="753.500" text-anchor="middle" font-family="Liberation Serif" font-size="17" fill="#fff">R</text>' + under(297, 31) + under(328, 9, '#587fa3')),
    T(346, 40, '<path d="M355 739H364L366 741H376V757H355Z" fill="#e6a71b"/><path d="M355 743H377V757H355Z" fill="#fbd568"/><path d="M359 757V749H373V757H369V753H363V757Z" fill="#378cd2"/>' + under(346, 40)),
    T(395, 40, '<circle cx="415" cy="748" r="11.300" fill="#fbc116"/><path d="M415 748L405.200 742.300A11.300 11.300 0 0 1 424.800 742.300Z" fill="#df4637"/><path d="M405.200 742.300A11.300 11.300 0 0 0 415 759.300L420 750L410 751Z" fill="#1aa260"/><path d="M415 742.500H424.800" stroke="#df4637"/><circle cx="415" cy="748" r="5.600" fill="#fff"/><circle cx="415" cy="748" r="4.300" fill="#4587f3"/>' + under(395, 40)),
    T(440, 48, '<rect x="440" y="728" width="48" height="40" fill="#4b5055"/><rect x="452.500" y="736.500" width="22" height="22" fill="#f5f7f8" stroke="#ccc"/>' + logo(463.5, 747.500, BLUE, 1.15) + under(440, 48)),
    T(1108, 17, '<circle cx="1113" cy="748" r="2.500" fill="none" stroke="#fff" stroke-width="1.200"/><path d="M1109 755Q1109 751 1113 751T1117 755M1115 751L1122 748" fill="none" stroke="#fff" stroke-width="1.200"/><circle cx="1119" cy="743" r="2.700" fill="none" stroke="#fff" stroke-width="1.200"/><path d="M1116 748Q1123 744 1123 750" fill="none" stroke="#fff" stroke-width="1.200"/>'),
    T(1146, 13, '<path d="M1147 751L1152 745.500L1157 751" fill="none" stroke="#fff" stroke-width="1.300"/>'),
    T(1167, 17, '<path d="M1168 746H1171L1174 743V753L1171 750.500H1168Z" fill="none" stroke="#fff"/><path d="M1176 746Q1177.500 748 1176 750.500M1178.500 744Q1181 748 1178.500 752.500" fill="none" stroke="#fff"/><path d="M1181 742Q1184.500 748 1181 754" fill="none" stroke="#888"/>'),
    T(1193, 16, '<path d="M1193.500 744.500H1206.500V752.500H1193.500ZM1207.500 747V750" fill="none" stroke="#fff"/><rect x="1195" y="746" width="5" height="5" fill="#fff"/>'),
    [1218, 23, `<div class="two">${txt(23, 'ENG')}${txt(15, 'US')}</div>`],
    [1254, 52, `<div class="two">${txt(42, '9:25 PM')}${txt(51, '07-Jan-21')}</div>`],
    T(1324, 26, '<path d="M1325 740H1341V753H1335L1331 756V753H1325Z" fill="#fff"/><path d="M1328 743.500H1338M1328 746.500H1338M1328 749.500H1335" stroke="#333"/><circle cx="1341" cy="755" r="7.500" fill="#333" stroke="#999"/><text x="1341" y="759.500" text-anchor="middle" font-size="12" font-family="Noto Sans" fill="#fff">1</text>'),
    [1362, 1, '<b style="width:1px;height:40px;background:#666"></b>']
  ]));

/* Sets its tracking so that the label occupies the width in its "w" attribute. */
customElements.define('fit-text', class extends HTMLElement {
  connectedCallback() {
    if (this.shadowRoot) return;
    this.attachShadow({mode: 'open'}).innerHTML = '<style>:host{display:inline-block;white-space:nowrap}</style><slot></slot>';
    const w = +this.getAttribute('w'), n = this.textContent.length;
    const now = this.getBoundingClientRect().width;
    if (w && now) { this.style.letterSpacing = ((w - now) / n).toFixed(3) + 'px'; this.style.width = w + 'px'; }
  }
});
</script>
</body>
</html>
